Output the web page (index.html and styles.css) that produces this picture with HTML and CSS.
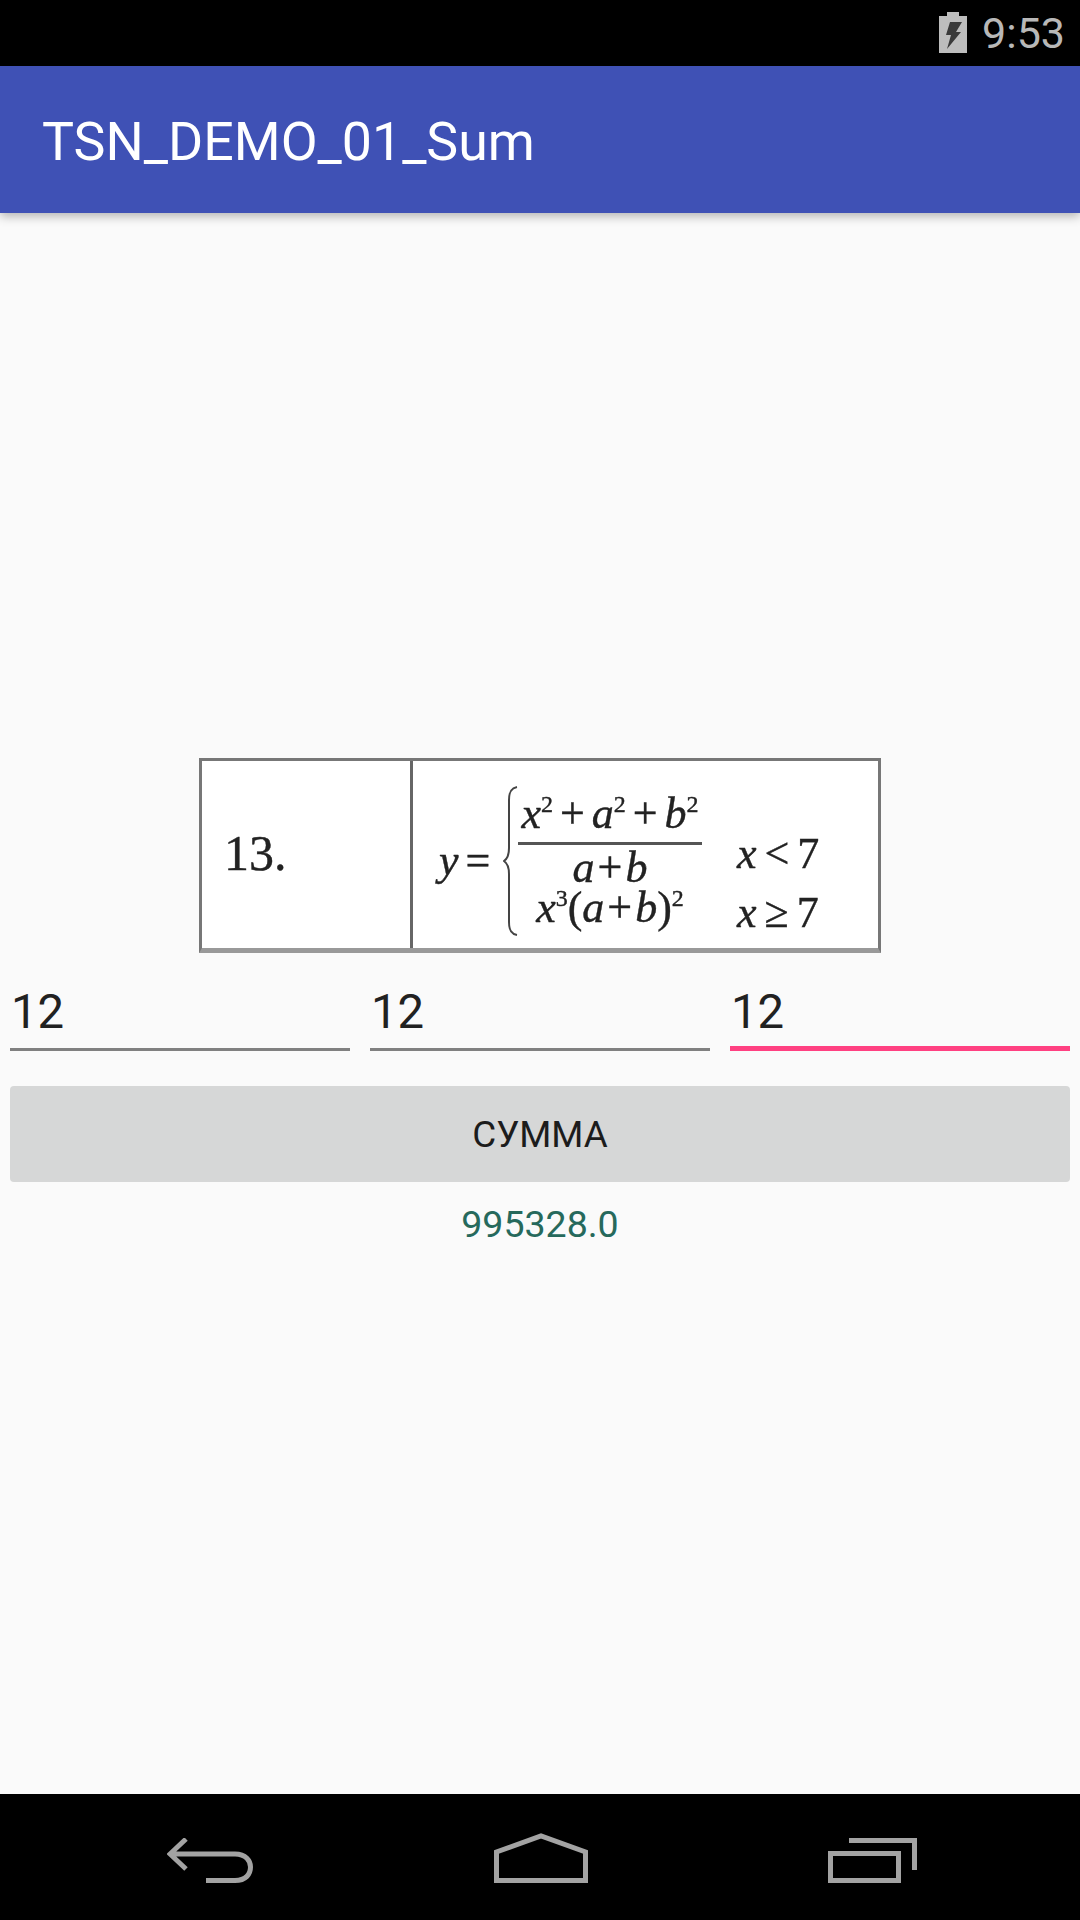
FILE: index.html
```html
<!DOCTYPE html>
<html lang="ru">
<head>
    <meta charset="UTF-8">
    <title>TSN_DEMO_01_Sum</title>
    <meta name="viewport" content="width=device-width, initial-scale=1">
    <link rel="stylesheet" href="styles.css">
</head>
<body>
    <div class="status-bar">
        <svg class="battery" width="28" height="41" viewBox="0 0 28 41">
            <path fill="#bdbdbd" d="M8 0H20V4H28V41H0V4H8Z"/>
            <path fill="#3a3a3a" d="M11 10H23L17 20H22L8 37L12 23H7Z"/>
        </svg>
        <span class="clock">9:53</span>
    </div>

    <header class="toolbar">TSN_DEMO_01_Sum</header>

    <main class="content">
        <div class="formula">
            <div class="task-number">13.</div>
            <div class="task-body">
                <span class="y-equals"><i>y</i> =</span>
                <svg class="brace" width="15" height="150" viewBox="0 0 15 150">
                    <path fill="none" stroke="#444" stroke-width="2" d="M14 1C8 2 6 6 6 14V62C6 69 4 73 1 75C4 77 6 81 6 88V136C6 144 8 148 14 149"/>
                </svg>
                <div class="cases">
                    <div class="case-row">
                        <div class="case-value">
                            <div class="numerator"><i>x</i><sup>2</sup> + <i>a</i><sup>2</sup> + <i>b</i><sup>2</sup></div>
                            <div class="denominator"><i>a</i> + <i>b</i></div>
                        </div>
                        <div class="case-cond case-cond-top"><i>x</i> &lt; 7</div>
                    </div>
                    <div class="case-row case-row-low">
                        <div class="case-value"><i>x</i><sup>3</sup>(<i>a</i> + <i>b</i>)<sup>2</sup></div>
                        <div class="case-cond case-cond-low"><i>x</i> ≥ 7</div>
                    </div>
                </div>
            </div>
        </div>

        <div class="fields">
            <div class="field">12</div>
            <div class="field">12</div>
            <div class="field field-active">12</div>
        </div>

        <button class="sum-button" type="button">СУММА</button>
        <div class="result">995328.0</div>
    </main>

    <nav class="nav-bar">
        <svg class="nav-icon" width="86" height="45" viewBox="0 0 86 45">
            <path fill="none" stroke="#a3a3a3" stroke-width="5" d="M19 1L3 16L19 31M3 16H68C79 16 83.500 23 83.500 29C83.500 36 79 42.500 68 42.500H39"/>
        </svg>
        <svg width="94" height="50" viewBox="0 0 94 50">
            <path fill="none" stroke="#a3a3a3" stroke-width="5" d="M2.500 47.500V19L47 3L91.500 19V47.500Z"/>
        </svg>
        <svg class="nav-icon" width="89" height="45" viewBox="0 0 89 45">
            <path fill="none" stroke="#a3a3a3" stroke-width="5" d="M2.500 15.500H70.500V42.500H2.500ZM21 2.500H86.500V32"/>
        </svg>
    </nav>
</body>
</html>
```

FILE: styles.css
```css
body {
    font-family: Roboto, sans-serif;
    margin: 0;
    width: 1080px;
    height: 1920px;
    background: #fafafa;
    display: flex;
    flex-direction: column;
    overflow: hidden;
}

.status-bar {
    height: 66px;
    background: #000;
    display: flex;
    align-items: center;
    justify-content: flex-end;
    gap: 15px;
    padding-right: 15px;
}

.battery {
    margin-top: -2px;
}

.clock {
    font-size: 43px;
    color: #b8b8b8;
}

.toolbar {
    height: 147px;
    line-height: 151px;
    padding-left: 42px;
    background: #3f51b5;
    color: #fff;
    font-size: 53.700px;
    box-shadow: 0 3px 10px rgba(0,0,0,0.3);
    position: relative;
}

.content {
    flex: 1;
    display: flex;
    flex-direction: column;
    justify-content: center;
    padding: 0 10px;
}

/* the task picture: a table scan, slightly soft */
.formula {
    align-self: center;
    width: 682px;
    height: 195px;
    box-sizing: border-box;
    background: #fff;
    border: 3px solid #777;
    border-bottom: 5px solid #999;
    display: flex;
    font-family: "Liberation Serif", serif;
    color: #222;
    -webkit-text-stroke: 0.4px #222;
}

.task-number {
    width: 211px;
    box-sizing: border-box;
    border-right: 3px solid #666;
    padding: 62px 0 0 22px;
    font-size: 50px;
    line-height: 60px;
    filter: blur(0.6px);
}

.task-body {
    flex: 1;
    display: flex;
    align-items: flex-start;
    padding-left: 26px;
    font-size: 44px;
    line-height: 46px;
    filter: blur(0.6px);
}

.y-equals {
    width: 64px;
    margin-top: 77px;
    word-spacing: -4px;
}

.brace {
    flex: none;
    margin-top: 25px;
}

.cases {
    margin-top: 30px;
}

.case-row {
    display: flex;
    align-items: flex-start;
}

.case-row-low {
    margin-top: -6px;
}

.case-value {
    width: 184px;
    text-align: center;
    white-space: nowrap;
    word-spacing: -8px;
}

.numerator {
    border-bottom: 3px solid #555;
    padding-bottom: 5px;
    word-spacing: -4px;
}

.case-cond {
    margin-left: 35px;
    white-space: nowrap;
    word-spacing: -3px;
}

.case-cond-top {
    margin-top: 40px;
}

.case-cond-low {
    margin-top: 5px;
}

sup {
    font-size: 24px;
    line-height: 0;
}

.fields {
    display: grid;
    grid-template-columns: repeat(3, 1fr);
    gap: 20px;
    align-items: start;
    margin-bottom: 35px;
}

.field {
    height: 98px;
    padding: 27px 0 0 1px;
    box-sizing: border-box;
    line-height: 64px;
    font-size: 47.250px;
    color: #212121;
    border-bottom: 3px solid #808080;
}

.field-active {
    border-bottom: 5px solid #ff4081;
    margin-bottom: -2px;
}

.sum-button {
    height: 96px;
    border: none;
    border-radius: 4px;
    background: #d6d7d7;
    font-family: Roboto, sans-serif;
    font-size: 36.750px;
    color: #1c1c1c;
    padding: 0;
}

.result {
    margin-top: 17px;
    height: 50px;
    line-height: 50px;
    text-align: center;
    font-size: 37.500px;
    color: #26695c;
}

.nav-bar {
    height: 126px;
    background: #000;
    display: flex;
    align-items: flex-start;
    justify-content: space-between;
    padding: 39px 163px 0 167px;
    box-sizing: border-box;
}

.nav-icon {
    margin-top: 5px;
}
```
